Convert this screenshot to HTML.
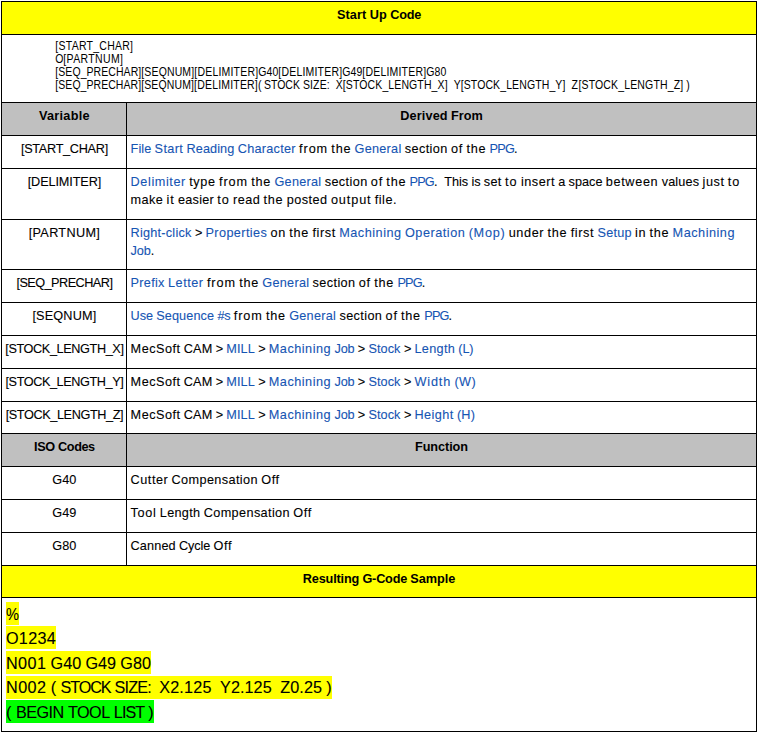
<!DOCTYPE html>
<html lang="en"><head><meta charset="utf-8"><title>Start Up Code</title>
<style>
html,body{margin:0;padding:0;background:#fff;}
body{width:758px;height:734px;position:relative;overflow:hidden;font-family:"Liberation Sans", sans-serif;color:#000;font-size:12.7px;}
.b{position:absolute;background:#000;}
.f{position:absolute;left:2px;width:754px;}
.ln{position:absolute;left:0;height:18px;line-height:18px;white-space:pre;-webkit-text-stroke:0.1px;}
.ln span,.ln a,.ln b{position:absolute;top:0;}
.hd{-webkit-text-stroke:0;}
.cd{font-size:10.5px;-webkit-text-stroke:0;transform-origin:0 12.64px;transform:scaleY(1.2);}
.sm{font-size:16.2px;}
.h{position:absolute;height:23px;left:6px;}
a{color:#1655b3;text-decoration:none;}
b{font-weight:bold;}
</style></head><body>
<div class="f" style="top:2px;height:32px;background:#ffff00"></div>
<div class="f" style="top:103px;height:32px;background:#c0c0c0"></div>
<div class="f" style="top:434px;height:32px;background:#c0c0c0"></div>
<div class="f" style="top:566px;height:31px;background:#ffff00"></div>
<div class="b" style="left:1px;top:1px;width:756px;height:1px"></div>
<div class="b" style="left:1px;top:731px;width:756px;height:1px"></div>
<div class="b" style="left:1px;top:1px;width:1px;height:731px"></div>
<div class="b" style="left:756px;top:1px;width:1px;height:731px"></div>
<div class="b" style="left:1px;top:34px;width:756px;height:1px"></div>
<div class="b" style="left:1px;top:102px;width:756px;height:1px"></div>
<div class="b" style="left:1px;top:135px;width:756px;height:1px"></div>
<div class="b" style="left:1px;top:168px;width:756px;height:1px"></div>
<div class="b" style="left:1px;top:219px;width:756px;height:1px"></div>
<div class="b" style="left:1px;top:269px;width:756px;height:1px"></div>
<div class="b" style="left:1px;top:302px;width:756px;height:1px"></div>
<div class="b" style="left:1px;top:335px;width:756px;height:1px"></div>
<div class="b" style="left:1px;top:368px;width:756px;height:1px"></div>
<div class="b" style="left:1px;top:401px;width:756px;height:1px"></div>
<div class="b" style="left:1px;top:433px;width:756px;height:1px"></div>
<div class="b" style="left:1px;top:466px;width:756px;height:1px"></div>
<div class="b" style="left:1px;top:499px;width:756px;height:1px"></div>
<div class="b" style="left:1px;top:532px;width:756px;height:1px"></div>
<div class="b" style="left:1px;top:565px;width:756px;height:1px"></div>
<div class="b" style="left:1px;top:597px;width:756px;height:1px"></div>
<div class="b" style="left:126px;top:102px;width:1px;height:464px"></div>
<div class="ln hd" style="top:5.60px"><b style="left:336.93px;letter-spacing:0.115px">Start</b> <b style="left:369.72px;letter-spacing:0.162px">Up</b> <b style="left:390.26px;letter-spacing:-0.227px">Code</b></div>
<div class="ln hd" style="top:106.60px"><b style="left:39.04px;letter-spacing:0.256px">Variable</b></div>
<div class="ln hd" style="top:106.60px"><b style="left:400.26px;letter-spacing:0.137px">Derived</b> <b style="left:451.08px;letter-spacing:-0.015px">From</b></div>
<div class="ln hd" style="top:437.60px"><b style="left:34.07px;letter-spacing:-0.382px">ISO</b> <b style="left:58.09px;letter-spacing:-0.426px">Codes</b></div>
<div class="ln hd" style="top:437.60px"><b style="left:415.04px;letter-spacing:-0.079px">Function</b></div>
<div class="ln hd" style="top:569.60px"><b style="left:302.80px;letter-spacing:-0.163px">Resulting</b> <b style="left:362.44px;letter-spacing:-0.203px">G-Code</b> <b style="left:410.35px;letter-spacing:-0.047px">Sample</b></div>
<div class="ln" style="top:139.60px"><span style="left:20.91px;letter-spacing:-0.292px">[START_CHAR]</span></div>
<div class="ln" style="top:172.60px"><span style="left:27.72px;letter-spacing:-0.124px">[DELIMITER]</span></div>
<div class="ln" style="top:223.60px"><span style="left:28.70px;letter-spacing:0.311px">[PARTNUM]</span></div>
<div class="ln" style="top:273.60px"><span style="left:16.43px;letter-spacing:-0.538px">[SEQ_PRECHAR]</span></div>
<div class="ln" style="top:306.60px"><span style="left:32.39px;letter-spacing:0.160px">[SEQNUM]</span></div>
<div class="ln" style="top:339.60px"><span style="left:5.25px;letter-spacing:-0.392px">[STOCK_LENGTH_X]</span></div>
<div class="ln" style="top:372.60px"><span style="left:5.49px;letter-spacing:-0.421px">[STOCK_LENGTH_Y]</span></div>
<div class="ln" style="top:405.60px"><span style="left:5.63px;letter-spacing:-0.394px">[STOCK_LENGTH_Z]</span></div>
<div class="ln" style="top:470.60px"><span style="left:52.37px;letter-spacing:0.026px">G40</span></div>
<div class="ln" style="top:503.60px"><span style="left:52.37px;letter-spacing:0.026px">G49</span></div>
<div class="ln" style="top:536.60px"><span style="left:52.37px;letter-spacing:0.026px">G80</span></div>
<div class="ln" style="top:139.60px"><a style="left:130.60px;letter-spacing:0.068px">File</a> <a style="left:154.62px;letter-spacing:0.368px">Start</a> <a style="left:186.56px;letter-spacing:0.084px">Reading</a> <a style="left:237.72px;letter-spacing:0.263px">Character</a> <span style="left:299.10px;letter-spacing:0.898px">from</span> <span style="left:331.37px;letter-spacing:0.743px">the</span> <a style="left:354.54px;letter-spacing:0.258px">General</a> <span style="left:404.79px;letter-spacing:0.378px">section</span> <span style="left:450.95px;letter-spacing:0.799px">of</span> <span style="left:466.43px;letter-spacing:0.743px">the</span> <a style="left:489.61px;letter-spacing:-0.816px">PPG</a><span style="left:513.95px;letter-spacing:0.168px">.</span></div>
<div class="ln" style="top:172.60px"><a style="left:130.60px;letter-spacing:0.586px">Delimiter</a> <span style="left:189.23px;letter-spacing:0.627px">type</span> <span style="left:219.02px;letter-spacing:0.898px">from</span> <span style="left:251.30px;letter-spacing:0.743px">the</span> <a style="left:274.47px;letter-spacing:0.258px">General</a> <span style="left:324.72px;letter-spacing:0.378px">section</span> <span style="left:370.87px;letter-spacing:0.799px">of</span> <span style="left:386.36px;letter-spacing:0.743px">the</span> <a style="left:409.53px;letter-spacing:-0.816px">PPG</a><span style="left:433.88px;letter-spacing:0.168px">.</span>  <span style="left:444.19px;letter-spacing:-0.018px">This</span> <span style="left:471.39px;letter-spacing:-0.042px">is</span> <span style="left:483.78px;letter-spacing:0.326px">set</span> <span style="left:504.99px;letter-spacing:1.017px">to</span> <span style="left:520.91px;letter-spacing:0.504px">insert</span> <span style="left:558.26px;letter-spacing:-0.048px">a</span> <span style="left:568.58px;letter-spacing:0.005px">space</span> <span style="left:605.77px;letter-spacing:0.657px">between</span> <span style="left:661.64px;letter-spacing:0.164px">values</span> <span style="left:702.61px;letter-spacing:0.516px">just</span> <span style="left:727.73px;letter-spacing:1.017px">to</span></div>
<div class="ln" style="top:190.60px"><span style="left:130.60px;letter-spacing:0.400px">make</span> <span style="left:166.53px;letter-spacing:0.957px">it</span> <span style="left:178.10px;letter-spacing:0.198px">easier</span> <span style="left:217.15px;letter-spacing:1.017px">to</span> <span style="left:233.07px;letter-spacing:0.420px">read</span> <span style="left:263.46px;letter-spacing:0.743px">the</span> <span style="left:286.63px;letter-spacing:0.483px">posted</span> <span style="left:330.93px;letter-spacing:0.883px">output</span> <span style="left:374.81px;letter-spacing:0.482px">file.</span></div>
<div class="ln" style="top:223.60px"><a style="left:130.60px;letter-spacing:0.225px">Right-click</a> <span style="left:194.90px;letter-spacing:-0.123px">&gt;</span> <a style="left:205.49px;letter-spacing:0.387px">Properties</a> <span style="left:270.50px;letter-spacing:0.645px">on</span> <span style="left:289.21px;letter-spacing:0.743px">the</span> <span style="left:312.38px;letter-spacing:0.622px">first</span> <a style="left:339.23px;letter-spacing:0.504px">Machining</a> <a style="left:404.91px;letter-spacing:0.522px">Operation</a> <a style="left:468.63px;letter-spacing:0.730px">(Mop)</a> <span style="left:508.72px;letter-spacing:0.598px">under</span> <span style="left:547.47px;letter-spacing:0.743px">the</span> <span style="left:570.64px;letter-spacing:0.622px">first</span> <a style="left:597.50px;letter-spacing:0.224px">Setup</a> <span style="left:635.08px;letter-spacing:0.584px">in</span> <span style="left:649.43px;letter-spacing:0.743px">the</span> <a style="left:672.60px;letter-spacing:0.504px">Machining</a></div>
<div class="ln" style="top:241.60px"><a style="left:130.60px;letter-spacing:-0.130px">Job</a><span style="left:150.67px;letter-spacing:0.168px">.</span></div>
<div class="ln" style="top:273.60px"><a style="left:130.60px;letter-spacing:0.278px">Prefix</a> <a style="left:168.00px;letter-spacing:0.528px">Letter</a> <span style="left:206.92px;letter-spacing:0.898px">from</span> <span style="left:239.20px;letter-spacing:0.743px">the</span> <a style="left:262.37px;letter-spacing:0.258px">General</a> <span style="left:312.62px;letter-spacing:0.378px">section</span> <span style="left:358.77px;letter-spacing:0.799px">of</span> <span style="left:374.26px;letter-spacing:0.743px">the</span> <a style="left:397.43px;letter-spacing:-0.816px">PPG</a><span style="left:421.78px;letter-spacing:0.168px">.</span></div>
<div class="ln" style="top:306.60px"><a style="left:130.60px;letter-spacing:-0.058px">Use</a> <a style="left:156.30px;letter-spacing:0.083px">Sequence</a> <a style="left:217.41px;letter-spacing:-0.196px">#s</a> <span style="left:233.72px;letter-spacing:0.898px">from</span> <span style="left:266.00px;letter-spacing:0.743px">the</span> <a style="left:289.17px;letter-spacing:0.258px">General</a> <span style="left:339.42px;letter-spacing:0.378px">section</span> <span style="left:385.57px;letter-spacing:0.799px">of</span> <span style="left:401.06px;letter-spacing:0.743px">the</span> <a style="left:424.24px;letter-spacing:-0.816px">PPG</a><span style="left:448.58px;letter-spacing:0.168px">.</span></div>
<div class="ln" style="top:339.60px"><span style="left:130.60px;letter-spacing:0.463px">MecSoft</span> <span style="left:183.68px;letter-spacing:0.193px">CAM</span> <span style="left:215.77px;letter-spacing:-0.123px">&gt;</span> <a style="left:226.36px;letter-spacing:0.072px">MILL</a> <span style="left:258.16px;letter-spacing:-0.123px">&gt;</span> <a style="left:268.76px;letter-spacing:0.504px">Machining</a> <a style="left:334.43px;letter-spacing:-0.130px">Job</a> <span style="left:357.80px;letter-spacing:-0.123px">&gt;</span> <a style="left:368.39px;letter-spacing:0.089px">Stock</a> <span style="left:403.88px;letter-spacing:-0.123px">&gt;</span> <a style="left:414.47px;letter-spacing:0.297px">Length</a> <a style="left:458.37px;letter-spacing:-0.161px">(L)</a></div>
<div class="ln" style="top:372.60px"><span style="left:130.60px;letter-spacing:0.463px">MecSoft</span> <span style="left:183.68px;letter-spacing:0.193px">CAM</span> <span style="left:215.77px;letter-spacing:-0.123px">&gt;</span> <a style="left:226.36px;letter-spacing:0.072px">MILL</a> <span style="left:258.16px;letter-spacing:-0.123px">&gt;</span> <a style="left:268.76px;letter-spacing:0.504px">Machining</a> <a style="left:334.43px;letter-spacing:-0.130px">Job</a> <span style="left:357.80px;letter-spacing:-0.123px">&gt;</span> <a style="left:368.39px;letter-spacing:0.089px">Stock</a> <span style="left:403.88px;letter-spacing:-0.123px">&gt;</span> <a style="left:414.47px;letter-spacing:0.843px">Width</a> <a style="left:454.42px;letter-spacing:0.488px">(W)</a></div>
<div class="ln" style="top:405.60px"><span style="left:130.60px;letter-spacing:0.463px">MecSoft</span> <span style="left:183.68px;letter-spacing:0.193px">CAM</span> <span style="left:215.77px;letter-spacing:-0.123px">&gt;</span> <a style="left:226.36px;letter-spacing:0.072px">MILL</a> <span style="left:258.16px;letter-spacing:-0.123px">&gt;</span> <a style="left:268.76px;letter-spacing:0.504px">Machining</a> <a style="left:334.43px;letter-spacing:-0.130px">Job</a> <span style="left:357.80px;letter-spacing:-0.123px">&gt;</span> <a style="left:368.39px;letter-spacing:0.089px">Stock</a> <span style="left:403.88px;letter-spacing:-0.123px">&gt;</span> <a style="left:414.47px;letter-spacing:0.425px">Height</a> <a style="left:457.00px;letter-spacing:0.125px">(H)</a></div>
<div class="ln" style="top:470.60px"><span style="left:130.60px;letter-spacing:0.520px">Cutter</span> <span style="left:171.58px;letter-spacing:0.369px">Compensation</span> <span style="left:261.13px;letter-spacing:0.642px">Off</span></div>
<div class="ln" style="top:503.60px"><span style="left:130.60px;letter-spacing:0.661px">Tool</span> <span style="left:159.82px;letter-spacing:0.297px">Length</span> <span style="left:203.72px;letter-spacing:0.369px">Compensation</span> <span style="left:293.27px;letter-spacing:0.642px">Off</span></div>
<div class="ln" style="top:536.60px"><span style="left:130.60px;letter-spacing:0.117px">Canned</span> <span style="left:179.05px;letter-spacing:-0.096px">Cycle</span> <span style="left:213.61px;letter-spacing:0.642px">Off</span></div>
<div class="ln cd" style="top:37.36px"><span style="left:55.30px;letter-spacing:0.260px">[START_CHAR]</span></div>
<div class="ln cd" style="top:50.36px"><span style="left:55.30px;letter-spacing:-0.167px">O</span><span style="left:63.30px;letter-spacing:0.358px">[PARTNUM]</span></div>
<div class="ln cd" style="top:63.36px"><span style="left:55.30px;letter-spacing:0.062px">[SEQ_PRECHAR]</span><span style="left:141.30px;letter-spacing:0.135px">[SEQNUM]</span><span style="left:194.30px;letter-spacing:0.196px">[DELIMITER]</span><span style="left:258.30px;letter-spacing:0.051px">G40</span><span style="left:278.30px;letter-spacing:0.196px">[DELIMITER]</span><span style="left:342.30px;letter-spacing:0.051px">G49</span><span style="left:362.30px;letter-spacing:0.196px">[DELIMITER]</span><span style="left:426.30px;letter-spacing:0.051px">G80</span></div>
<div class="ln cd" style="top:76.36px"><span style="left:55.30px;letter-spacing:0.052px">[SEQ_PRECHAR]</span><span style="left:141.16px;letter-spacing:0.124px">[SEQNUM]</span><span style="left:194.08px;letter-spacing:0.187px">[DELIMITER]</span><span style="left:257.98px;letter-spacing:-0.501px">(</span> <span style="left:263.97px;letter-spacing:-0.008px">STOCK</span> <span style="left:302.91px;letter-spacing:0.140px">SIZE:</span>  <span style="left:335.86px;letter-spacing:-0.014px">X</span><span style="left:342.85px;letter-spacing:0.109px">[STOCK_LENGTH_X]</span>  <span style="left:453.67px;letter-spacing:-0.014px">Y</span><span style="left:460.66px;letter-spacing:0.109px">[STOCK_LENGTH_Y]</span>  <span style="left:571.49px;letter-spacing:0.575px">Z</span><span style="left:578.47px;letter-spacing:0.146px">[STOCK_LENGTH_Z]</span> <span style="left:686.30px;letter-spacing:-0.501px">)</span></div>
<div class="h" style="top:602px;width:13px;background:#ffff00"></div>
<div class="ln sm" style="top:605.39px"><span style="left:6.00px;transform-origin:0 0;transform:scaleX(0.903)">%</span></div>
<div class="h" style="top:626px;width:50px;background:#ffff00"></div>
<div class="ln sm" style="top:629.39px"><span style="left:6.00px;letter-spacing:0.280px">O1234</span></div>
<div class="h" style="top:651px;width:145px;background:#ffff00"></div>
<div class="ln sm" style="top:654.39px"><span style="left:6.00px;letter-spacing:0.421px">N001</span> <span style="left:50.60px;letter-spacing:0.021px">G40</span> <span style="left:85.47px;letter-spacing:0.021px">G49</span> <span style="left:120.34px;letter-spacing:0.021px">G80</span></div>
<div class="h" style="top:676px;width:326px;background:#ffff00"></div>
<div class="ln sm" style="top:678.39px"><span style="left:6.00px;letter-spacing:0.449px">N002</span> <span style="left:50.72px;letter-spacing:0.278px">(</span> <span style="left:60.62px;letter-spacing:-1.142px">STOCK</span> <span style="left:114.60px;letter-spacing:-0.858px">SIZE:</span>  <span style="left:159.24px;letter-spacing:0.170px">X2.125</span>  <span style="left:220.02px;letter-spacing:0.071px">Y2.125</span>  <span style="left:280.20px;letter-spacing:0.101px">Z0.25</span> <span style="left:326.33px;letter-spacing:0.278px">)</span></div>
<div class="h" style="top:700px;width:148px;background:#00ff00"></div>
<div class="ln sm" style="top:703.39px"><span style="left:6.00px;letter-spacing:0.274px">(</span> <span style="left:15.89px;letter-spacing:-0.508px">BEGIN</span> <span style="left:67.95px;letter-spacing:-0.521px">TOOL</span> <span style="left:113.86px;letter-spacing:-0.984px">LIST</span> <span style="left:148.34px;letter-spacing:0.274px">)</span></div>
</body></html>
